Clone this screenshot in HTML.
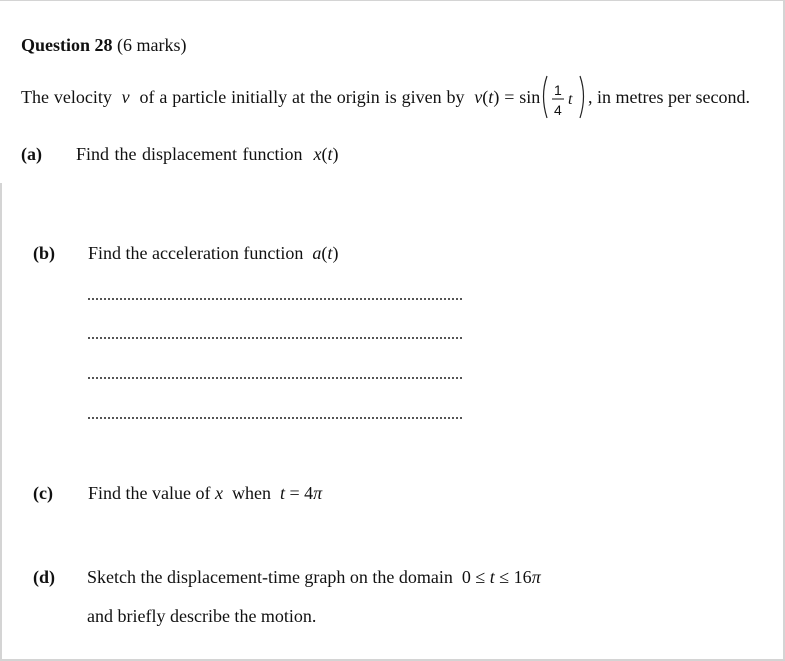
<!DOCTYPE html>
<html><head><meta charset="utf-8"><style>
html,body{margin:0;padding:0;background:#fff;}
body{width:785px;height:661px;position:relative;overflow:hidden;font-family:"Liberation Serif",serif;font-size:18px;color:#111;}
.t{position:absolute;white-space:nowrap;line-height:20px;}
i{font-style:italic;}
.dots{position:absolute;left:88px;width:376px;height:2px;background:repeating-linear-gradient(90deg,#555 0 2px,transparent 2px 4px);}
</style></head><body>
<div style="position:absolute;left:0;top:0;width:785px;height:1px;background:#d4d4d4"></div>
<div style="position:absolute;left:783px;top:0;width:2px;height:661px;background:#d4d4d4"></div>
<div style="position:absolute;left:0;top:659px;width:785px;height:2px;background:#d4d4d4"></div>
<div style="position:absolute;left:0;top:183px;width:2px;height:478px;background:#d4d4d4"></div>

<div class="t" style="left:21px;top:35px"><b>Question 28</b> (6 marks)</div>
<div class="t" style="left:21px;top:87px;word-spacing:0.4px">The velocity <i>&nbsp;v&nbsp;</i> of a particle initially at the origin is given by &nbsp;<i>v</i>(<i>t</i>) = sin</div>
<svg style="position:absolute;left:541px;top:74px" width="50" height="46">
<path d="M6 2 Q-1 22 6 44" fill="none" stroke="#222" stroke-width="1.2"/>
<text x="13" y="21" font-family="Liberation Sans" font-size="14" fill="#111">1</text>
<line x1="11" y1="25" x2="23" y2="25" stroke="#111" stroke-width="1"/>
<text x="13" y="41" font-family="Liberation Sans" font-size="14" fill="#111">4</text>
<text x="27" y="30" font-family="Liberation Serif" font-style="italic" font-size="16" fill="#111">t</text>
<path d="M39 2 Q46 22 39 44" fill="none" stroke="#222" stroke-width="1.2"/>
</svg>
<div class="t" style="left:588px;top:87px">, in metres per second.</div>

<div class="t" style="left:21px;top:144px"><b>(a)</b></div>
<div class="t" style="left:76px;top:144px;word-spacing:1px">Find the displacement function &nbsp;<i>x</i>(<i>t</i>)</div>

<div class="t" style="left:33px;top:243px"><b>(b)</b></div>
<div class="t" style="left:88px;top:243px">Find the acceleration function &nbsp;<i>a</i>(<i>t</i>)</div>
<div class="dots" style="top:298px"></div>
<div class="dots" style="top:337px"></div>
<div class="dots" style="top:377px"></div>
<div class="dots" style="top:417px"></div>

<div class="t" style="left:33px;top:483px"><b>(c)</b></div>
<div class="t" style="left:88px;top:483px">Find the value of <i>x</i>&nbsp; when &nbsp;<i>t</i> = 4<i>π</i></div>

<div class="t" style="left:33px;top:567px"><b>(d)</b></div>
<div class="t" style="left:87px;top:567px">Sketch the displacement-time graph on the domain &nbsp;0 ≤ <i>t</i> ≤ 16<i>π</i></div>
<div class="t" style="left:87px;top:606px">and briefly describe the motion.</div>
</body></html>
